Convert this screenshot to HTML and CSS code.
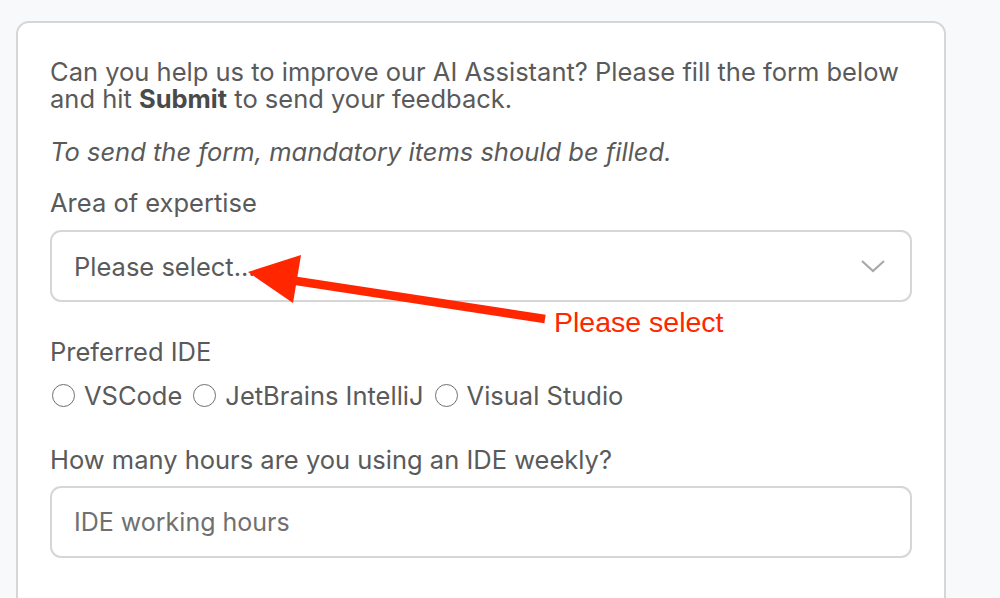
FILE: index.html
```html
<!DOCTYPE html>
<html lang="en">
<head>
<meta charset="utf-8">
<title>AI Assistant feedback</title>
<link rel="stylesheet" href="styles.css">
</head>
<body>
<div class="card">
  <p class="intro">Can you help us to improve our AI Assistant? Please fill the form below and hit <b>Submit</b> to send your feedback.</p>
  <p class="note">To send the form, mandatory items should be filled.</p>
  <div class="label label-area">Area of expertise</div>
  <div class="select">
    <span class="select-text">Please select...</span>
    <svg class="chev" width="26" height="16" viewBox="0 0 26 16"><path d="M2 3 L13 13 L24 3" fill="none" stroke="#a9a9a9" stroke-width="2.2"/></svg>
  </div>
  <div class="label label-ide">Preferred IDE</div>
  <div class="radios">
    <label class="radio"><span class="dot"></span>VSCode</label>
    <label class="radio"><span class="dot"></span>JetBrains IntelliJ</label>
    <label class="radio"><span class="dot"></span>Visual Studio</label>
  </div>
  <div class="label label-hours">How many hours are you using an IDE weekly?</div>
  <div class="input"><span class="placeholder">IDE working hours</span></div>
</div>
<svg class="annot" width="1000" height="598" viewBox="0 0 1000 598">
  <line x1="290" y1="280" x2="545" y2="319" stroke="#ff2600" stroke-width="8.5"/>
  <polygon points="248,272 301,255 293,303" fill="#ff2600"/>
</svg>
<div class="annot-label">Please select</div>
</body>
</html>
```
FILE: styles.css
```css
html, body {
  margin: 0;
  padding: 0;
}
body {
  background: #f8f9fb;
  width: 1000px;
  height: 598px;
  overflow: hidden;
  font-family: Inter, "Noto Sans", sans-serif;
  color: #5a5a5a;
  font-size: 25.5px;
}
.card {
  margin: 21px 0 0 16px;
  width: 930px;
  height: 700px;
  box-sizing: border-box;
  border: 2px solid #d6d6d6;
  border-radius: 13px;
  background: #fff;
  padding: 35px 32px 0 32px;
}
.intro {
  margin: 0;
  line-height: 27px;
}
.intro b {
  font-weight: 700;
  color: #4a4a4a;
}
.note {
  margin: 26px 0 0 0;
  line-height: 27px;
  font-style: italic;
}
.label {
  line-height: 27px;
}
.label-area { margin-top: 24px; }
.select {
  margin-top: 14px;
  height: 72px;
  box-sizing: border-box;
  border: 2px solid #d6d6d6;
  border-radius: 11px;
  display: flex;
  align-items: center;
  justify-content: space-between;
  padding: 0 24px 0 22px;
}
.label-ide { margin-top: 36px; }
.radios {
  margin-top: 17px;
  display: flex;
  gap: 9px;
  line-height: 27px;
}
.radio {
  display: flex;
  align-items: center;
  gap: 9px;
}
.dot {
  width: 23px;
  height: 23px;
  box-sizing: border-box;
  border: 1.6px solid #6f6f6f;
  border-radius: 50%;
  margin-left: 2px;
}
.label-hours { margin-top: 37px; }
.input {
  margin-top: 13px;
  height: 72px;
  box-sizing: border-box;
  border: 2px solid #d6d6d6;
  border-radius: 11px;
  display: flex;
  align-items: center;
  padding: 0 22px;
}
.placeholder {
  color: #707070;
  font-size: 25px;
}
.annot {
  position: absolute;
  left: 0;
  top: 0;
  pointer-events: none;
}
.annot-label {
  position: absolute;
  left: 554px;
  top: 305px;
  font-family: "Liberation Sans", Arial, sans-serif;
  font-size: 28.5px;
  line-height: 34px;
  color: #ff2600;
}
```
